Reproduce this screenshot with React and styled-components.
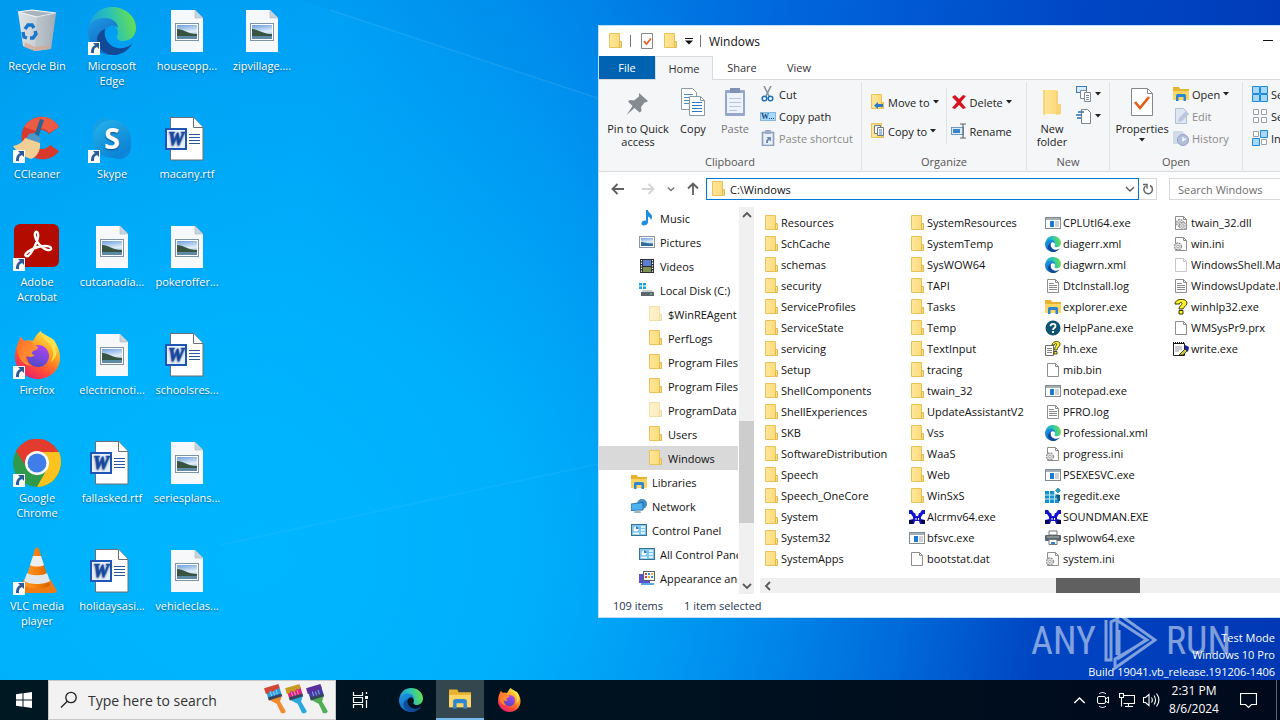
import React from 'react'
import styled, { createGlobalStyle, css } from 'styled-components'

const GlobalStyle = createGlobalStyle`
  * {
    box-sizing: border-box;
  }
  body {
    margin: 0;
    overflow: hidden;
  }
  body, button, input {
    font-family: "Open Sans", "Noto Sans", sans-serif;
    font-size: 11px;
  }
  button {
    border: 0;
    padding: 0;
    margin: 0;
    background: none;
    color: inherit;
  }
  ul {
    list-style: none;
    margin: 0;
    padding: 0;
  }
`

/* ---------- icons ---------- */

const Svg = styled.svg`
  display: block;
  flex: none;
  width: ${({ $w }) => $w}px;
  height: ${({ $h }) => $h}px;
`

const HiddenSvg = styled.svg`
  position: absolute;
  width: 0;
  height: 0;
`

const Defs = () => (
  <HiddenSvg aria-hidden="true">
    <defs>
      <linearGradient id="edgeTop" x1="0" y1="0.6" x2="1" y2="0.4">
        <stop offset="0" stopColor="#1b9de2" />
        <stop offset="0.5" stopColor="#2bc3b4" />
        <stop offset="1" stopColor="#6be04a" />
      </linearGradient>
      <linearGradient id="edgeLeft" x1="0" y1="0" x2="0.6" y2="1">
        <stop offset="0" stopColor="#1f9be4" />
        <stop offset="1" stopColor="#0f62bd" />
      </linearGradient>
      <linearGradient id="foxBody" x1="0.8" y1="0" x2="0.2" y2="1">
        <stop offset="0" stopColor="#fff44f" />
        <stop offset="0.4" stopColor="#ff9a1f" />
        <stop offset="0.7" stopColor="#ff4a3a" />
        <stop offset="1" stopColor="#e3167c" />
      </linearGradient>
      <linearGradient id="foxGlobe" x1="0.7" y1="0" x2="0.3" y2="1">
        <stop offset="0" stopColor="#b243f0" />
        <stop offset="1" stopColor="#4a4bc8" />
      </linearGradient>
      <linearGradient id="foxHead" x1="0" y1="0" x2="1" y2="1">
        <stop offset="0" stopColor="#ff6a2b" />
        <stop offset="1" stopColor="#ffa632" />
      </linearGradient>
      <linearGradient id="skype" x1="0" y1="0" x2="0.6" y2="1">
        <stop offset="0" stopColor="#27b3ec" />
        <stop offset="1" stopColor="#0b83d6" />
      </linearGradient>
      <linearGradient id="bin" x1="0" y1="0" x2="1" y2="0">
        <stop offset="0" stopColor="#dfe3e6" />
        <stop offset="0.6" stopColor="#c3cbd1" />
        <stop offset="1" stopColor="#8d9aa5" />
      </linearGradient>
      <linearGradient id="sky" x1="0" y1="0" x2="0.2" y2="1">
        <stop offset="0" stopColor="#6c9fdc" />
        <stop offset="0.6" stopColor="#e2eefa" />
        <stop offset="1" stopColor="#86a9bd" />
      </linearGradient>
      <linearGradient id="folder" x1="0" y1="0" x2="1" y2="0">
        <stop offset="0" stopColor="#ffe79a" />
        <stop offset="1" stopColor="#fbdb7c" />
      </linearGradient>
      <linearGradient id="cone" x1="0" y1="0" x2="1" y2="0">
        <stop offset="0" stopColor="#ff9a2c" />
        <stop offset="0.5" stopColor="#f77f0c" />
        <stop offset="1" stopColor="#d85f00" />
      </linearGradient>
    </defs>
  </HiddenSvg>
)

const EdgeShape = () => (
  <>
    <path d="M1 20C3 8 12 0 24 0c14 0 24 10 24 21 0 8-6 13-13 13-4 0-7-2-6-5 3-5-1-12-9-12C12 17 3 19 1 20z" fill="url(#edgeTop)" />
    <path d="M0 25c0-9 8-14 16-14 9 0 14 5 14 10-2-2-5-3-8-2-5 2-7 8-5 14 2 7 8 13 15 14-3 1-5 1-8 1C11 48 0 38 0 25z" fill="url(#edgeLeft)" />
    <path d="M17 22c-2 8 3 17 12 19 6 1 12-1 16-5-4 7-11 12-20 12-9-1-16-8-16-15 0-5 3-9 8-11z" fill="#114a97" />
  </>
)

const FirefoxShape = () => (
  <>
    <path d="M5 12c1-1 1-3 3-6 1 2 2 3 4 4 2-1 5-1 8 0 2-3 4-8 8-10 1 5 5 7 9 11 1-1 1-3 1-4 6 5 9 12 9 20 0 12-10 21-22 21S2 38 2 26c0-5 1-10 3-14z" fill="url(#foxBody)" />
    <path d="M28 1c0 6 8 9 11 16 2 5 1 10-1 14 5-3 8-12 4-20-1-3-3-3-4-4-3-2-8-4-10-6z" fill="#ffe04a" />
    <circle cx="25" cy="25" r="11" fill="url(#foxGlobe)" />
    <path d="M5 12c1-1 1-3 3-6 1 2 2 3 4 4 4-1 7 0 9 4 2 0 4 1 4 3-1 2-4 2-6 4-1 2 1 3 3 3-3 3-8 2-9 0-1 5 2 9 6 11C8 34 3 24 5 12z" fill="url(#foxHead)" />
  </>
)

const shortcutArrow = (
  <>
    <rect x="0" y="35" width="12" height="13" fill="#fbfdff" />
    <path d="M3 46c0-5 2-7 4-8l-2-2h6v6l-2-2c-3 1-3 3-3 6z" fill="#2c5a96" />
  </>
)

const desktopArt = {
  bin: (
    <>
      <path d="M5 5l14-2 24 3-5 36-16 2-12-5z" fill="url(#bin)" />
      <path d="M5 5l14-2 24 3-19 4z" fill="#a9b4bc" stroke="#f3f7f9" strokeWidth="1.2" />
      <path d="M24 10l-2 34 16-2 5-36z" fill="#aeb9c1" opacity=".55" />
      <path d="M12 35l10 5 15-2-1 4-14 2-11-4z" fill="#d9a48e" opacity=".7" />
      <g fill="none" stroke="#1777cc" strokeWidth="3.4">
        <path d="M12 22l3-4h4l2 3" />
        <path d="M22 24l1 3-3 4h-3" />
        <path d="M14 31l-3-1-1-5" />
      </g>
    </>
  ),
  edge: <EdgeShape />,
  ccleaner: (
    <>
      <path d="M46 12C42 5 34 1 26 2 14 4 7 14 9 26c2 12 13 20 24 18 6-1 10-4 13-8l-9-6c-3 4-8 5-12 3-5-2-7-8-5-13 3-6 12-7 16-1z" fill="#d9392c" />
      <path d="M46 12C42 5 34 1 26 2 19 3 14 7 11 12l12 4c4-4 10-3 13 2z" fill="#ee5b45" />
      <path d="M27 4l4 1-6 18-4-2z" fill="#2c6391" />
      <path d="M16 19c4-2 9 1 12 5l-3 5-13-4z" fill="#4f97c8" />
      <path d="M12 23l15 5c1 7-3 14-9 16C11 42 4 37 0 31c5-1 9-3 12-8z" fill="#f2cf95" />
    </>
  ),
  skype: (
    <>
      <circle cx="17" cy="16" r="13" fill="#149fe6" />
      <circle cx="31" cy="32" r="12" fill="#0d86da" />
      <circle cx="24" cy="24" r="19" fill="url(#skype)" />
      <text x="24" y="34" textAnchor="middle" fontFamily="Open Sans, sans-serif" fontWeight="700" fontSize="29" fill="#fff">S</text>
    </>
  ),
  acrobat: (
    <>
      <rect x="1" y="1" width="45" height="43" rx="6" fill="#b30b00" />
      <path d="M13 33c-3-2 5-7 12-9s14-1 13 2c-2 4-14-3-16-13-1-6 4-6 3 1-1 6-8 21-12 19z" fill="none" stroke="#fff" strokeWidth="2.4" />
    </>
  ),
  firefox: <FirefoxShape />,
  chrome: (
    <>
      <circle cx="24" cy="24" r="24" fill="#2f9a4b" />
      <path d="M3 12a24 24 0 0 1 42 0L46 14H24L14 29z" fill="#e33b2e" />
      <path d="M45 13a24 24 0 0 1-21 35l10-18-1-17z" fill="#fcc31e" />
      <path d="M24 13h22c2 5 3 11 0 19H30z" fill="#fcc31e" />
      <circle cx="24" cy="24" r="12" fill="#fff" />
      <circle cx="24" cy="24" r="9.5" fill="#3f7de8" />
    </>
  ),
  vlc: (
    <>
      <path d="M11 32h26l7 12-2 2H8l-2-2z" fill="#ee7c14" />
      <path d="M22 2c1-2 3-2 4 0l11 36c-4 5-22 5-26 0z" fill="url(#cone)" />
      <path d="M20 9h8l3 9c-3 2-11 2-14 0z" fill="#eceff1" />
      <path d="M14 26c4 3 16 3 20 0l3 8c-5 4-21 4-26 0z" fill="#e2e6e9" />
    </>
  ),
  image: (
    <>
      <path d="M8 3h24l8 8v34H8z" fill="#f7f8fa" />
      <path d="M32 3v8h8z" fill="#c9d3dc" stroke="#a5b8c8" strokeWidth=".6" />
      <rect x="12.500" y="16.500" width="23" height="17" fill="#fff" stroke="#7f93a6" />
      <rect x="14" y="18" width="20" height="14" fill="url(#sky)" />
      <path d="M14 22c6 0 11 5 20 5v2c-7 1-14 0-20 1z" fill="#36543f" />
      <path d="M14 29h20v3H14z" fill="#5f8aa6" />
    </>
  ),
  word: (
    <>
      <path d="M7.500 2.500h23l9.500 10v32.500h-32.500z" fill="#fff" stroke="#6b6f76" />
      <path d="M30.500 2.500v10H40" fill="#fff" stroke="#6b6f76" />
      <path d="M26 19.500h11M26 22.500h11M26 25.500h11M26 28.500h11" stroke="#2b579a" />
      <rect x="3" y="14" width="20" height="20" fill="#e8f0fb" stroke="#1f56b5" strokeWidth="2" />
      <text x="13" y="30" textAnchor="middle" fontFamily="Liberation Serif, serif" fontWeight="700" fontStyle="italic" fontSize="18" fill="#1c4fae" stroke="#1c4fae" strokeWidth=".7">W</text>
    </>
  ),
}

const doc = (
  <>
    <path d="M2.500 1.500h8l3 3v10h-11z" fill="#fff" stroke="#8e8e8e" />
    <path d="M10.500 1.500v3h3" fill="none" stroke="#8e8e8e" />
  </>
)

const gear = (cx, cy) => (
  <>
    <circle cx={cx} cy={cy} r="3.500" fill="#e6e6e6" stroke="#929292" strokeWidth="1.400" strokeDasharray="1.800 1" />
    <circle cx={cx} cy={cy} r="1.300" fill="#fff" stroke="#929292" strokeWidth=".8" />
  </>
)

const explorerFolder = (
  <>
    <path d="M0 1h6l1 2h9v11H0z" fill="#e9b32f" />
    <path d="M0 5h16v9H0z" fill="#fbd667" />
    <path d="M3 15V9.500C3 8.500 4 8 5 8h6c1 0 2 .5 2 1.500V15h-2.500v-4h-5v4z" fill="#2f86d0" />
  </>
)

const controlPanel = (
  <>
    <rect x=".5" y="2.500" width="15" height="11" fill="#7cc6f2" stroke="#38708f" />
    <circle cx="5" cy="7" r="2.500" fill="#fff" />
    <path d="M5 7V4.500A2.500 2.500 0 0 1 7.500 7z" fill="#2a75c0" />
    <path d="M2 11.500h6M10 5h4M10 8h4M10 11h4" stroke="#fff" strokeWidth="1.300" />
  </>
)

const bigFolder = (
  <>
    <path d="M2.500.5h10v14h-10z" fill="url(#folder)" stroke="#e9c25a" />
    <path d="M12.500 8.500h2v6h-2z" fill="#f9dd84" stroke="#e2b94f" />
  </>
)

const question = (x, y) => (
  <path
    d={`M${x} ${y + 3}c0-4 8-5 8-1 0 3-3 3-3 6h-2.500c0-3 2-4 2-6 0-1-2-1-2 1zM${x + 2} ${y + 9.5}h3v2.500h-3z`}
    fill="#fdf32b"
    stroke="#3c3a05"
    strokeWidth=".9"
  />
)

const smallArt = {
  folder: bigFolder,
  hidden: <g opacity=".5">{bigFolder}</g>,
  music: <path d="M7 0h2c0 3 4 3.500 4 7 0 1-.5 2.500-1.200 3C12 8 10 7 9 6.500V12c0 2-2 3.500-4.500 3.500S2 12 4 11c1-.6 2-.7 3-.4z" fill="#1c8ee0" />,
  pictures: (
    <>
      <rect x=".5" y="2.500" width="15" height="11" fill="#fff" stroke="#8b97a2" />
      <rect x="2" y="4" width="12" height="8" fill="url(#sky)" />
      <path d="M2 8c4 0 7 2 12 1.500V12H2z" fill="#2f6d9c" />
    </>
  ),
  videos: (
    <>
      <rect x="1" y="1" width="14" height="14" fill="#2b2d31" />
      <rect x="4" y="2" width="8" height="6" fill="#5a7fd1" />
      <rect x="4" y="9" width="8" height="5" fill="#7e9254" />
      <path d="M2.500 2v12M13.500 2v12" stroke="#fff" strokeWidth="1.200" strokeDasharray="1.300 1.300" />
    </>
  ),
  disk: (
    <>
      <path d="M0 1h3v2.500H0zM4 1h3v2.500H4zM0 4.500h3V7H0zM4 4.500h3V7H4z" fill="#16a5e0" />
      <path d="M4 8h9l2 3H2z" fill="#c9cdd0" />
      <rect x="2" y="10" width="13" height="4" fill="#5e666c" />
      <rect x="11" y="11.500" width="2" height="1" fill="#6df06a" />
    </>
  ),
  libraries: explorerFolder,
  explorer: explorerFolder,
  network: (
    <>
      <circle cx="11" cy="6" r="5" fill="#3f8fc4" />
      <path d="M0 6l12-1.500v7.500L0 12.500z" fill="#4cb1ee" stroke="#1c6ba8" strokeWidth=".9" />
      <path d="M4 12.500l5-.4 1 2.900H3z" fill="#9cb3c2" />
    </>
  ),
  control: controlPanel,
  appearance: (
    <>
      <rect x="0" y="4" width="11" height="9" fill="#5d51cf" />
      <rect x="4.500" y="1.500" width="11" height="9" fill="#fff" stroke="#5a6068" />
      <path d="M6 4h2M6 7h2" stroke="#e23a2e" strokeWidth="2" />
      <path d="M9 4h2M12 7h2" stroke="#2f8bd8" strokeWidth="2" />
      <path d="M12 4h2M9 7h2" stroke="#efb52a" strokeWidth="2" />
      <path d="M2 14h13" stroke="#5ea7de" strokeWidth="2" />
    </>
  ),
  exe: (
    <>
      <rect x=".5" y="2.500" width="15" height="11" fill="#fff" stroke="#7f8a93" />
      <path d="M1 4h14" stroke="#a5afb6" strokeWidth="2" />
      <rect x="5" y="6" width="4" height="6" fill="#1b79d8" />
      <path d="M10 7h4M10 9h4M10 11h4" stroke="#9aa4ab" />
    </>
  ),
  edge: <g transform="scale(.333)"><EdgeShape /></g>,
  log: <>{doc}<path d="M4 5.500h5M4 7.500h8M4 9.500h8M4 11.500h8" stroke="#8c8c8c" /></>,
  file: doc,
  manifest: <g opacity=".5">{doc}</g>,
  ini: <>{doc}{gear(5, 10.5)}</>,
  dll: <>{doc}{gear(7, 8)}{gear(10, 11)}</>,
  help: (
    <>
      <circle cx="8" cy="8" r="7.500" fill="#0f5374" />
      <path d="M5.500 6.300C5.500 3 10.500 3 10.500 6c0 2-2.500 2-2.500 4" fill="none" stroke="#fff" strokeWidth="1.800" />
      <rect x="7" y="11" width="2" height="2" fill="#fff" />
    </>
  ),
  winhelp: (
    <path d="M2 5c0-6 12-6 12-1 0 3-4 4-4 6H6c0-3 3-4 3-5.500C9 3 6.500 3 6.500 5zM6 11.500h4v3.500H6z" fill="#fdf32b" stroke="#3c3a05" />
  ),
  hh: (
    <>
      <path d="M.5 4.500h8v10h-8z" fill="#fff" stroke="#6d6d6d" />
      <path d="M2 7.500h5M2 9.500h5M2 11.500h5" stroke="#888" />
      {question(7, 1)}
    </>
  ),
  write: (
    <>
      <path d="M.5 2.500h11v12h-11z" fill="#fff" stroke="#222" />
      <path d="M0 2h12" stroke="#111" strokeWidth="2" strokeDasharray="1 1" />
      <path d="M2 6h7M2 8h7M2 10h4" stroke="#999" />
      <path d="M6 14l6-6 2 2-4 4z" fill="#d5cf1f" stroke="#222" strokeWidth=".8" />
      <path d="M12 4l4 2-1 5-3-3z" fill="#1c1f9f" />
    </>
  ),
  regedit: (
    <>
      <path d="M0 3h10v3h4v9H0z" fill="#1690cf" />
      <path d="M0 7h14M0 11h14M4.500 3v12M9.500 3v12" stroke="#bfe6f8" />
      <path d="M13 0l2.500 2.500L13 5l-2.500-2.500z" fill="#1fa3c9" stroke="#155f8c" strokeWidth=".6" />
      <path d="M11 7h4v6h-2z" fill="#165a7d" />
    </>
  ),
  sound: (
    <>
      <path d="M0 1h3l2 3h1l1 3h2l1-3h1l2-3h3v4h-2l-2 3v2l4 1v4h-5l-1-3H6l-1 3H0v-4l4-1V8L2 5H0z" fill="#1414d0" />
      <path d="M0 11h4v4H0zM12 11h4v4h-4z" fill="#07074a" />
      <path d="M6.500 9h1v2h-1zM9 9h1v2H9z" fill="#fff" />
    </>
  ),
  printer: (
    <>
      <path d="M4 1h8v4H4z" fill="#fff" stroke="#777" />
      <rect x="0" y="5" width="16" height="6" rx="1" fill="#59646c" />
      <path d="M2 7h12" stroke="#b5bec4" />
      <path d="M4 9.500h8v5H4z" fill="#fff" stroke="#777" />
      <path d="M6 12h4v2H6z" fill="#2a87d3" />
    </>
  ),
  check: (
    <>
      <path d="M2.500.5h11v15h-11z" fill="#fff" stroke="#85898d" />
      <path d="M5 8l2.500 3L12 5.500" fill="none" stroke="#e8622c" strokeWidth="1.800" />
    </>
  ),
  cut: (
    <>
      <path d="M4 0l5 10M11 0L6 10" stroke="#85929d" strokeWidth="1.600" />
      <circle cx="4.500" cy="12.500" r="2.300" fill="none" stroke="#2072b8" strokeWidth="1.500" />
      <circle cx="10.500" cy="12.500" r="2.300" fill="none" stroke="#2072b8" strokeWidth="1.500" />
    </>
  ),
  path: (
    <>
      <rect x=".5" y="4.500" width="15" height="8" fill="#aad9f8" stroke="#86b7dc" />
      <text x="1" y="11" fontFamily="Liberation Serif, serif" fontWeight="700" fontSize="8" fill="#134a85">W</text>
      <path d="M9 10.500h5" stroke="#134a85" strokeDasharray="1 1" />
    </>
  ),
  pasteShortcut: (
    <>
      <rect x="2.500" y="2.500" width="11" height="13" fill="#eaf0f8" stroke="#8d9dbd" strokeWidth="1.600" />
      <rect x="5" y="0" width="6" height="4" fill="#9caac6" />
      <path d="M6 13c0-3 1-4 2-4.500L6.500 7H11v4.500L9.500 10C8 10.500 8 11 8 13z" fill="#7185b5" />
    </>
  ),
  moveTo: (
    <>
      {bigFolder}
      <path d="M5 11.500L9 8v2h5v3H9v2z" fill="#2a78c8" />
    </>
  ),
  copyTo: (
    <>
      {bigFolder}
      <path d="M5.500 2.500h6v8h-6z" fill="#fff" stroke="#6b7d8d" />
      <path d="M8.500 4.500h6v8h-6z" fill="#fff" stroke="#6b7d8d" />
      <path d="M10 7h3M10 9h3M10 11h3" stroke="#4b85c0" />
    </>
  ),
  remove: <path d="M1 3l3-2 4 4 4-4 3 1-5 6 5 6-3 1-4-4-4 4-3-1 5-6z" fill="#d5121f" />,
  rename: (
    <>
      <rect x=".5" y="4.500" width="12" height="7" fill="#d9ecfa" stroke="#6f9cc2" />
      <rect x="2" y="6" width="7" height="4" fill="#3b84c9" />
      <path d="M9 1h6M9 15h6M12 1v14" stroke="#60656a" strokeWidth="1.200" />
    </>
  ),
  newItem: (
    <>
      <rect x=".5" y=".5" width="10" height="6" fill="#d6eafa" stroke="#3f7cb0" />
      <path d="M4.500 4.500h6v8h-6z" fill="#fff" stroke="#7c8994" />
      <path d="M8.500 6.500h6v9h-6z" fill="#fff" stroke="#7c8994" />
      <path d="M10 9.500h3M10 11.500h3M10 13.500h3" stroke="#7c8994" />
    </>
  ),
  easyAccess: (
    <>
      <path d="M5.500 1.500h6l3 3v11h-9z" fill="#fff" stroke="#7c8994" />
      <path d="M2 4h6M0 7h6M1 10h4" stroke="#2f6fae" strokeWidth="1.300" />
    </>
  ),
  edit: (
    <>
      <path d="M2.500.5h8l3 3v12h-11z" fill="#dfe7f3" stroke="#b4bfd2" />
      <path d="M5 14l1-4 7-7 3 3-7 7z" fill="#b9c6dd" />
    </>
  ),
  history: (
    <>
      <path d="M0 1h9l3 3v10H0z" fill="#d2dae8" />
      <circle cx="10" cy="10" r="5.500" fill="#b2bfda" stroke="#93a3c3" />
      <path d="M10 7v3.500l3-2" fill="none" stroke="#fff" strokeWidth="1.300" />
    </>
  ),
  selectAll: <path d="M.5.5h7v7h-7zM8.500.5h7v7h-7zM.5 8.500h7v7h-7zM8.500 8.500h7v7h-7z" fill="#a7d8fa" stroke="#1e88dc" />,
  selectNone: <path d="M1.500 1.500h5v5h-5zM9.500 1.500h5v5h-5zM1.500 9.500h5v5h-5zM9.500 9.500h5v5h-5z" fill="#fff" stroke="#9aa0a5" />,
  invert: (
    <>
      <path d="M1.500 1.500h5v5h-5zM9.500 9.500h5v5h-5z" fill="#fff" stroke="#9aa0a5" />
      <path d="M8.500.5h7v7h-7zM.5 8.500h7v7h-7z" fill="#a7d8fa" stroke="#1e88dc" />
    </>
  ),
}

const largeArt = {
  pin: <path d="M17 6l9 8-2 1.500-1-.5-4 5 .5 4-2 1.500-5-4.500-8 7 6-9-4.500-4.500L8 13l4 .5 5-4z" fill="#858b90" />,
  copy: (
    <>
      <path d="M4.500 1.500h11l4 4v17h-15z" fill="#fff" stroke="#8d99a5" />
      <path d="M7 7.500h9M7 10.500h9M7 13.500h9M7 16.500h6" stroke="#4b8acb" />
      <path d="M12.500 9.500h11l4 4v15h-15z" fill="#fff" stroke="#8d99a5" />
      <path d="M23.500 9.500v4h4" fill="none" stroke="#8d99a5" />
      <path d="M15 15.500h10M15 18.500h10M15 21.500h10M15 24.500h10" stroke="#2f78c4" />
    </>
  ),
  paste: (
    <>
      <rect x="6" y="3" width="20" height="26" rx="1" fill="#97a7c9" />
      <rect x="8" y="6" width="16" height="20" fill="#eef3fa" />
      <path d="M11 1h10v5H11z" fill="#8292b4" />
      <path d="M10 11.500h12M10 15.500h12M10 19.500h12M10 23.500h8" stroke="#b9c6de" />
    </>
  ),
  folder: (
    <>
      <path d="M7 3h13v24H7z" fill="url(#folder)" />
      <path d="M20 3l2 1v13h3v10l-5 1z" fill="#f6d476" />
      <path d="M7 3h2v26l-2-2z" fill="#f7d77c" />
    </>
  ),
  properties: (
    <>
      <path d="M5.500 1.500h16l5 5v22h-21z" fill="#fff" stroke="#83888d" />
      <path d="M21.500 1.500v5h5" fill="none" stroke="#83888d" />
      <path d="M9 15l5 6 9-11" fill="none" stroke="#e8591c" strokeWidth="2.600" />
    </>
  ),
}

const Small = ({ name }) => (
  <Svg $w={16} $h={16} viewBox="0 0 16 16" aria-hidden="true">{smallArt[name]}</Svg>
)

const Chevron = ({ dir = 'down', color = '#5a5a5a', thick = 1.4, size = 10 }) => {
  const d = {
    down: 'M1 3l4 4 4-4',
    up: 'M1 7l4-4 4 4',
    left: 'M7 1L3 5l4 4',
  }[dir]
  return (
    <Svg $w={size} $h={size} viewBox="0 0 10 10" aria-hidden="true">
      <path d={d} fill="none" stroke={color} strokeWidth={thick} />
    </Svg>
  )
}

const Caret = () => (
  <Svg $w={6} $h={4} viewBox="0 0 6 4" aria-hidden="true">
    <path d="M0 0h6L3 3.500z" fill="#222" />
  </Svg>
)

/* ---------- desktop ---------- */

const Screen = styled.div`
  height: 100vh;
  display: flex;
  flex-direction: column;
  overflow: hidden;
`

const Desktop = styled.main`
  position: relative;
  flex: 1;
  min-height: 0;
  overflow: hidden;
  background:
    radial-gradient(ellipse 62% 95% at 20% 82%, rgba(0, 182, 255, 1), rgba(0, 182, 255, 0.85) 35%, rgba(0, 170, 255, 0) 100%),
    linear-gradient(97deg, #0096ec 0%, #009cf4 24%, #0086ea 42%, #0066dc 58%, #0046c4 80%, #0038b4 100%);
`

const Beams = styled.svg`
  position: absolute;
  inset: 0;
  width: 100%;
  height: 100%;
`

const Shortcuts = styled.ul`
  position: relative;
  display: grid;
  grid-template-rows: repeat(6, 108px);
  grid-auto-columns: 75px;
  grid-auto-flow: column;
  width: max-content;
`

const ShortcutCell = styled.li`
  grid-column: ${({ $col }) => $col};
  grid-row: ${({ $row }) => $row};
`

const ShortcutButton = styled.button`
  display: flex;
  flex-direction: column;
  align-items: center;
  gap: 3px;
  width: 74px;
  padding-top: 7px;
  color: #fff;
  line-height: 15px;
  text-align: center;
  text-shadow: 0 1px 2px rgba(0, 30, 70, 0.6);
`

const ShortcutLabel = styled.span`
  width: 64px;
  white-space: ${({ $file }) => ($file ? 'nowrap' : 'normal')};
  display: flex;
  justify-content: center;
`

const desktopItems = [
  [1, 1, 'Recycle Bin', 'bin'],
  [1, 2, 'CCleaner', 'ccleaner', true],
  [1, 3, 'Adobe Acrobat', 'acrobat', true],
  [1, 4, 'Firefox', 'firefox', true],
  [1, 5, 'Google Chrome', 'chrome', true],
  [1, 6, 'VLC media player', 'vlc', true],
  [2, 1, 'Microsoft Edge', 'edge', true],
  [2, 2, 'Skype', 'skype', true],
  [2, 3, 'cutcanadia...', 'image'],
  [2, 4, 'electricnoti...', 'image'],
  [2, 5, 'fallasked.rtf', 'word'],
  [2, 6, 'holidaysasi...', 'word'],
  [3, 1, 'houseopp...', 'image'],
  [3, 2, 'macany.rtf', 'word'],
  [3, 3, 'pokeroffer...', 'image'],
  [3, 4, 'schoolsres...', 'word'],
  [3, 5, 'seriesplans...', 'image'],
  [3, 6, 'vehicleclas...', 'image'],
  [4, 1, 'zipvillage....', 'image'],
]

const DesktopIcons = () => (
  <Shortcuts>
    {desktopItems.map(([col, row, label, art, linked]) => (
      <ShortcutCell key={label} $col={col} $row={row}>
        <ShortcutButton>
          <Svg $w={48} $h={48} viewBox="0 0 48 48" aria-hidden="true">
            {desktopArt[art]}
            {linked && shortcutArrow}
          </Svg>
          <ShortcutLabel $file={!linked}>{label}</ShortcutLabel>
        </ShortcutButton>
      </ShortcutCell>
    ))}
  </Shortcuts>
)

/* ---------- explorer window ---------- */

const Window = styled.section`
  position: absolute;
  top: 25px;
  left: 598px;
  right: -104px;
  display: flex;
  flex-direction: column;
  background: #fff;
  border: 1px solid #bfe0f7;
  color: #111;
`

const TitleBar = styled.header`
  display: flex;
  align-items: center;
  height: 30px;
  padding-left: 8px;
`

const QuickAccess = styled.div`
  display: flex;
  align-items: center;
  gap: 7px;
  margin-right: 7px;
`

const Rule = styled.span`
  width: 1px;
  height: 12px;
  margin-right: 1px;
  background: #777;
`

const Title = styled.h1`
  flex: 1;
  margin: 0;
  font-size: 12px;
  font-weight: 400;
`

const Control = styled.button`
  display: grid;
  place-items: center;
  width: 46px;
  height: 30px;
`

const Tabs = styled.nav`
  display: flex;
  height: 24px;
  border-bottom: 1px solid #dadbdc;
`

const tabLook = {
  file: css`
    background: #0063b1;
    color: #fff;
  `,
  active: css`
    height: 24px;
    background: #f5f6f7;
    border: 1px solid #dadbdc;
    border-bottom: 0;
  `,
}

const Tab = styled.button`
  width: ${({ $wide }) => ($wide ? 58 : 56)}px;
  height: 23px;
  color: #333;
  ${({ $look }) => tabLook[$look]}
`

const Ribbon = styled.div`
  display: flex;
  height: 92px;
  background: #f5f6f7;
  border-bottom: 1px solid #dadbdc;
  overflow: hidden;
`

const Group = styled.section`
  display: flex;
  flex-direction: column;
  flex: none;
  width: ${({ $w }) => $w}px;
  margin: 2px 0 1px;
  border-right: 1px solid #e0e1e2;
  color: #222;
`

const GroupTools = styled.div`
  display: flex;
  flex: 1;
  padding: 1px 0 0 5px;
`

const GroupName = styled.h2`
  margin: 0;
  font-size: 11px;
  line-height: 16px;
  font-weight: 400;
  text-align: center;
  color: #555;
`

const LargeButton = styled.button`
  display: flex;
  flex-direction: column;
  align-items: center;
  gap: 3px;
  flex: none;
  width: ${({ $w }) => $w}px;
  padding-top: 4px;
  line-height: 13px;
  color: ${({ $off }) => ($off ? '#777' : 'inherit')};
`

const Stack = styled.div`
  display: flex;
  flex-direction: column;
  flex: none;
  padding: ${({ $loose }) => ($loose ? '8px 0 0 2px' : '0 0 0 4px')};
  gap: ${({ $loose }) => ($loose ? 7 : 0)}px;
`

const SmallButton = styled.button`
  display: flex;
  align-items: center;
  gap: 3px;
  height: 22px;
  white-space: nowrap;
  color: ${({ $off }) => ($off ? '#8a8a8a' : 'inherit')};
`

const InnerRule = styled.span`
  width: 1px;
  height: 56px;
  margin: 5px 2px 0 7px;
  background: #e0e1e2;
`

const Large = ({ art, w, off, children }) => (
  <LargeButton $w={w} $off={off}>
    <Svg $w={32} $h={32} viewBox="0 0 32 32" aria-hidden="true">{largeArt[art]}</Svg>
    {children}
  </LargeButton>
)

const Tool = ({ art, label, menu, off, hint }) => (
  <SmallButton $off={off} aria-label={hint}>
    <Small name={art} />
    {label}
    {menu && <Caret />}
  </SmallButton>
)

const AddressRow = styled.div`
  display: flex;
  align-items: center;
  height: 34px;
  padding: 0 10px 0 4px;
`

const NavButton = styled.button`
  display: grid;
  place-items: center;
  width: ${({ $w }) => $w}px;
  height: 22px;
`

const AddressBox = styled.label`
  display: flex;
  align-items: center;
  gap: 4px;
  flex: 1;
  height: 22px;
  padding: 0 3px 0 3px;
  border: 1px solid #0078d7;
`

const BareInput = styled.input`
  flex: 1;
  min-width: 0;
  padding: 0;
  border: 0;
  outline: 0;
  background: none;
  color: #111;

  &::placeholder {
    color: #6d6d6d;
    opacity: 1;
  }
`

const Refresh = styled.button`
  display: grid;
  place-items: center;
  width: 18px;
  height: 22px;
  border: 1px solid #d9d9d9;
  border-left: 0;
`

const SearchBox = styled.label`
  display: flex;
  width: 204px;
  height: 22px;
  margin-left: 12px;
  padding: 0 8px;
  border: 1px solid #d9d9d9;
`

const Body = styled.div`
  display: flex;
  height: 388px;
`

const Tree = styled.ul`
  flex: none;
  width: 140px;
  overflow: hidden;
`

const TreeItem = styled.button`
  display: flex;
  align-items: center;
  gap: 5px;
  width: 139px;
  height: 24px;
  padding-left: ${({ $level }) => 24 + $level * 8}px;
  white-space: nowrap;
  overflow: hidden;
  background: ${({ $current }) => ($current ? '#d9d9d9' : 'none')};
`

const VerticalBar = styled.div`
  display: flex;
  flex-direction: column;
  justify-content: space-between;
  width: 15px;
  margin-top: 1px;
  background: #f0f0f0;
`

const BarButton = styled.button`
  display: grid;
  place-items: center;
  flex: none;
  width: 15px;
  height: 16px;
`

const VerticalThumb = styled.div`
  height: 102px;
  margin: 198px 0 auto;
  background: #cdcdcd;
`

const Files = styled.div`
  flex: 1;
  min-width: 0;
  display: flex;
  flex-direction: column;
  justify-content: space-between;
  padding: 6px 0 1px 6px;
`

const FileList = styled.ul`
  display: grid;
  grid-template-rows: repeat(17, 21px);
  grid-template-columns: 146px 136px 128px auto;
  grid-auto-flow: column;
  padding-left: 3px;
`

const FileItem = styled.li`
  display: flex;
  align-items: center;
  gap: 2px;
  white-space: nowrap;
`

const HorizontalBar = styled.div`
  display: flex;
  height: 15px;
  background: #f0f0f0;
`

const HorizontalThumb = styled.div`
  width: 84px;
  margin-left: 281px;
  background: #606060;
`

const StatusBar = styled.footer`
  display: flex;
  align-items: center;
  gap: 21px;
  height: 23px;
  padding-left: 14px;
  color: #26344f;
`

const tree = [
  ['Music', 'music', 2],
  ['Pictures', 'pictures', 2],
  ['Videos', 'videos', 2],
  ['Local Disk (C:)', 'disk', 2],
  ['$WinREAgent', 'hidden', 3],
  ['PerfLogs', 'folder', 3],
  ['Program Files', 'folder', 3],
  ['Program Files (x86)', 'folder', 3],
  ['ProgramData', 'hidden', 3],
  ['Users', 'folder', 3],
  ['Windows', 'folder', 3, true],
  ['Libraries', 'libraries', 1],
  ['Network', 'network', 1],
  ['Control Panel', 'control', 1],
  ['All Control Panel Items', 'control', 2],
  ['Appearance and Personalization', 'appearance', 2],
]

const folders = [
  'Resources', 'SchCache', 'schemas', 'security', 'ServiceProfiles', 'ServiceState',
  'servicing', 'Setup', 'ShellComponents', 'ShellExperiences', 'SKB', 'SoftwareDistribution',
  'Speech', 'Speech_OneCore', 'System', 'System32', 'SystemApps', 'SystemResources',
  'SystemTemp', 'SysWOW64', 'TAPI', 'Tasks', 'Temp', 'TextInput', 'tracing', 'twain_32',
  'UpdateAssistantV2', 'Vss', 'WaaS', 'Web', 'WinSxS',
]

const files = [
  ...folders.map((name) => [name, 'folder']),
  ['Alcrmv64.exe', 'sound'],
  ['bfsvc.exe', 'exe'],
  ['bootstat.dat', 'file'],
  ['CPLUtl64.exe', 'exe'],
  ['diagerr.xml', 'edge'],
  ['diagwrn.xml', 'edge'],
  ['DtcInstall.log', 'log'],
  ['explorer.exe', 'explorer'],
  ['HelpPane.exe', 'help'],
  ['hh.exe', 'hh'],
  ['mib.bin', 'file'],
  ['notepad.exe', 'exe'],
  ['PFRO.log', 'log'],
  ['Professional.xml', 'edge'],
  ['progress.ini', 'ini'],
  ['PSEXESVC.exe', 'exe'],
  ['regedit.exe', 'regedit'],
  ['SOUNDMAN.EXE', 'sound'],
  ['splwow64.exe', 'printer'],
  ['system.ini', 'ini'],
  ['twain_32.dll', 'dll'],
  ['win.ini', 'ini'],
  ['WindowsShell.Manifest', 'manifest'],
  ['WindowsUpdate.log', 'log'],
  ['winhlp32.exe', 'winhelp'],
  ['WMSysPr9.prx', 'file'],
  ['write.exe', 'write'],
]

const Arrow = ({ d, color }) => (
  <Svg $w={14} $h={14} viewBox="0 0 14 14" aria-hidden="true">
    <path d={d} fill="none" stroke={color} strokeWidth="1.8" />
  </Svg>
)

const Explorer = () => (
  <Window aria-label="Windows folder">
    <TitleBar>
      <QuickAccess>
        <Small name="folder" />
        <Rule />
        <Small name="check" />
      </QuickAccess>
      <QuickAccess>
        <Small name="folder" />
        <Svg $w={8} $h={8} viewBox="0 0 8 8" aria-hidden="true">
          <path d="M0 1.500h8" stroke="#111" />
          <path d="M0 3.500h8L4 7.500z" fill="#111" />
        </Svg>
        <Rule />
      </QuickAccess>
      <Title>Windows</Title>
      <Control aria-label="Minimize">
        <Svg $w={10} $h={10} viewBox="0 0 10 10"><path d="M0 4.500h10" stroke="#111" /></Svg>
      </Control>
      <Control aria-label="Maximize">
        <Svg $w={10} $h={10} viewBox="0 0 10 10"><path d="M.5.5h9v9h-9z" fill="none" stroke="#111" /></Svg>
      </Control>
      <Control aria-label="Close">
        <Svg $w={10} $h={10} viewBox="0 0 10 10"><path d="M0 0l10 10M10 0L0 10" stroke="#111" /></Svg>
      </Control>
    </TitleBar>

    <Tabs>
      <Tab $look="file">File</Tab>
      <Tab $look="active" $wide>Home</Tab>
      <Tab $wide>Share</Tab>
      <Tab>View</Tab>
    </Tabs>

    <Ribbon>
      <Group $w={263}>
        <GroupTools>
          <Large art="pin" w={68}>Pin to Quick<br />access</Large>
          <Large art="copy" w={42}>Copy</Large>
          <Large art="paste" w={42} off>Paste</Large>
          <Stack>
            <Tool art="cut" label="Cut" />
            <Tool art="path" label="Copy path" />
            <Tool art="pasteShortcut" label="Paste shortcut" off />
          </Stack>
        </GroupTools>
        <GroupName>Clipboard</GroupName>
      </Group>
      <Group $w={165}>
        <GroupTools>
          <Stack $loose>
            <Tool art="moveTo" label="Move to" menu />
            <Tool art="copyTo" label="Copy to" menu />
          </Stack>
          <InnerRule />
          <Stack $loose>
            <Tool art="remove" label="Delete" menu />
            <Tool art="rename" label="Rename" />
          </Stack>
        </GroupTools>
        <GroupName>Organize</GroupName>
      </Group>
      <Group $w={83}>
        <GroupTools>
          <Large art="folder" w={40}>New<br />folder</Large>
          <Stack>
            <Tool art="newItem" hint="New item" menu />
            <Tool art="easyAccess" hint="Easy access" menu />
          </Stack>
        </GroupTools>
        <GroupName>New</GroupName>
      </Group>
      <Group $w={133}>
        <GroupTools>
          <Large art="properties" w={54}>
            Properties
            <Caret />
          </Large>
          <Stack>
            <Tool art="explorer" label="Open" menu />
            <Tool art="edit" label="Edit" off />
            <Tool art="history" label="History" off />
          </Stack>
        </GroupTools>
        <GroupName>Open</GroupName>
      </Group>
      <Group $w={112}>
        <GroupTools>
          <Stack>
            <Tool art="selectAll" label="Select all" />
            <Tool art="selectNone" label="Select none" />
            <Tool art="invert" label="Invert selection" />
          </Stack>
        </GroupTools>
        <GroupName>Select</GroupName>
      </Group>
    </Ribbon>

    <AddressRow>
      <NavButton $w={30} aria-label="Back"><Arrow d="M13 7H2M6.500 2L1.500 7l5 5" color="#5f5f5f" /></NavButton>
      <NavButton $w={30} aria-label="Forward"><Arrow d="M1 7h11M7.500 2l5 5-5 5" color="#d5d5d5" /></NavButton>
      <NavButton $w={16} aria-label="Recent locations"><Chevron color="#777" size={8} thick={1.8} /></NavButton>
      <NavButton $w={27} aria-label="Up"><Arrow d="M7 13V2M2 6.500l5-5 5 5" color="#5f5f5f" /></NavButton>
      <AddressBox>
        <Small name="folder" />
        <BareInput aria-label="Address" defaultValue="C:\Windows" />
        <Chevron />
      </AddressBox>
      <Refresh aria-label="Refresh">
        <Svg $w={12} $h={12} viewBox="0 0 12 12">
          <path d="M8 2.500a4.300 4.300 0 1 1-4.500.5M1 1.500h4v4" fill="none" stroke="#666" strokeWidth="1.500" />
        </Svg>
      </Refresh>
      <SearchBox>
        <BareInput aria-label="Search Windows" placeholder="Search Windows" />
      </SearchBox>
    </AddressRow>

    <Body>
      <Tree>
        {tree.map(([label, art, level, current]) => (
          <li key={label}>
            <TreeItem $level={level} $current={current}>
              <Small name={art} />
              {label}
            </TreeItem>
          </li>
        ))}
      </Tree>
      <VerticalBar>
        <BarButton aria-label="Scroll up"><Chevron dir="up" thick={1.8} /></BarButton>
        <VerticalThumb />
        <BarButton aria-label="Scroll down"><Chevron thick={1.8} /></BarButton>
      </VerticalBar>
      <Files>
        <FileList>
          {files.map(([name, art]) => (
            <FileItem key={name}>
              <Small name={art} />
              {name}
            </FileItem>
          ))}
        </FileList>
        <HorizontalBar>
          <BarButton aria-label="Scroll left"><Chevron dir="left" thick={1.8} /></BarButton>
          <HorizontalThumb />
        </HorizontalBar>
      </Files>
    </Body>

    <StatusBar>
      <span>109 items</span>
      <span>1 item selected</span>
    </StatusBar>
  </Window>
)

/* ---------- watermarks ---------- */

const BuildInfo = styled.div`
  position: absolute;
  right: 5px;
  bottom: 0;
  color: #fff;
  line-height: 17px;
  text-align: right;
`

const Brand = styled.div`
  position: absolute;
  right: 49px;
  bottom: 8px;
  display: flex;
  align-items: center;
  gap: 7px;
  font-family: "Roboto Condensed", "Liberation Sans Narrow", "Liberation Sans", sans-serif;
  font-size: 38px;
  line-height: 62px;
  color: #fff;
  opacity: 0.5;
`

/* ---------- taskbar ---------- */

const Taskbar = styled.footer`
  display: flex;
  flex: none;
  height: 40px;
  background: linear-gradient(90deg, #001822, #000a1c);
  color: #fff;
`

const TaskButton = styled.button`
  display: grid;
  place-items: center;
  width: ${({ $w = 48 }) => $w}px;
  height: 40px;
  margin-right: ${({ $gap = 0 }) => $gap}px;
  ${({ $open }) => $open && css`
    background: #34474f;
    border-bottom: 2px solid #76b9ed;
  `}
`

const TaskSearch = styled.label`
  display: flex;
  align-items: center;
  gap: 10px;
  width: 288px;
  height: 40px;
  padding: 0 6px 0 11px;
  background: #f2f2f2;
  border: 1px solid #c8c8c8;

  input {
    font-size: 14px;
  }
  input::placeholder {
    color: #333;
  }
`

const Tray = styled.div`
  display: flex;
  align-items: center;
  margin-left: auto;
  padding-right: 3px;
`

const Clock = styled.div`
  width: 62px;
  font-size: 12px;
  line-height: 18px;
  text-align: center;
`

const Peek = styled.span`
  width: 1px;
  height: 40px;
  margin-left: 5px;
  background: #5a6470;
`

const brushes = [
  ['#2b9fe6', '#d64532', '#f28a2e'],
  ['#d8247c', '#c99a22', '#29a9de'],
  ['#3a3fa8', '#5c2b9c', '#4fae54'],
]

const Taskband = () => (
  <Taskbar>
    <TaskButton aria-label="Start">
      <Svg $w={16} $h={16} viewBox="0 0 16 16">
        <path d="M0 2.200l6.500-.9v6.200H0zM7.500 1.200L16 0v7.500H7.500zM0 8.500h6.500v6.200L0 13.800zM7.500 8.500H16V16l-8.500-1.200z" fill="#fff" />
      </Svg>
    </TaskButton>
    <TaskSearch>
      <Svg $w={18} $h={18} viewBox="0 0 18 18" aria-hidden="true">
        <circle cx="11" cy="6.500" r="5.200" fill="none" stroke="#222" strokeWidth="1.300" />
        <path d="M7.300 10.200L1 16.500" stroke="#222" strokeWidth="1.300" />
      </Svg>
      <BareInput aria-label="Search" placeholder="Type here to search" />
      <Svg $w={66} $h={34} viewBox="0 0 66 34" aria-hidden="true">
        {brushes.map(([bristle, paint, handle], i) => (
          <g key={paint} transform={`translate(${2 + i * 21} 5) rotate(-17)`}>
            <path d="M6 15h4l3 13c0 2-5 2-5 0z" fill={handle} />
            <path d="M0 12h14l-4 6H6z" fill={handle} />
            <path d="M0 2h14v9H0z" fill={bristle} />
            <path d="M4 5v5M7 5v5M10 5v5" stroke="#fff" opacity=".5" />
            <path d="M-1 0h15v4l-2 1-2-1-3 2-3-2-2 2H-1z" fill={paint} />
            <rect x="0" y="10" width="14" height="3" fill="#37445c" />
          </g>
        ))}
      </Svg>
    </TaskSearch>
    <TaskButton $gap={3} aria-label="Task view">
      <Svg $w={17} $h={16} viewBox="0 0 17 16">
        <path d="M1.500 0v3.500h9V0M1.500 16v-3.500h9V16M1.500 5.500h9v5h-9zM14.500 0v2M14.500 8v8" fill="none" stroke="#fff" strokeWidth="1.200" />
        <rect x="13" y="4" width="3" height="3" fill="#fff" />
      </Svg>
    </TaskButton>
    <TaskButton $gap={1} aria-label="Microsoft Edge">
      <Svg $w={24} $h={24} viewBox="0 0 48 48"><EdgeShape /></Svg>
    </TaskButton>
    <TaskButton $gap={1} $open aria-label="File Explorer">
      <Svg $w={22} $h={22} viewBox="0 0 16 16">{explorerFolder}</Svg>
    </TaskButton>
    <TaskButton aria-label="Firefox">
      <Svg $w={24} $h={24} viewBox="0 0 48 48"><FirefoxShape /></Svg>
    </TaskButton>
    <Tray>
      <TaskButton $w={24} aria-label="Show hidden icons"><Chevron dir="up" color="#fff" thick={1.1} size={13} /></TaskButton>
      <TaskButton $w={24} aria-label="Meet now">
        <Svg $w={16} $h={18} viewBox="0 0 16 18">
          <g fill="none" stroke="#fff">
            <rect x="2.500" y="5.500" width="8" height="7" rx="1.500" />
            <path d="M10.500 8l3-2v6l-3-2M4 3c2-2 5-2 7 0M4 15c2 2 5 2 7 0" />
          </g>
        </Svg>
      </TaskButton>
      <TaskButton $w={24} aria-label="Network">
        <Svg $w={16} $h={16} viewBox="0 0 16 16">
          <path d="M4.500 3.500h11v8h-11M9.500 11.500v3M6 14.500h8M.5 1.500h4v4h-4zM2.500 5.500v9" fill="none" stroke="#fff" strokeWidth="1.100" />
        </Svg>
      </TaskButton>
      <TaskButton $w={24} aria-label="Volume">
        <Svg $w={17} $h={16} viewBox="0 0 17 16">
          <path d="M.5 5.500h2l3.500-3v11l-3.500-3h-2zM8.500 5.500c1 1.500 1 3.500 0 5M11 3.500c2 2.500 2 6.500 0 9M13.500 1.500c3 4 3 9 0 13" fill="none" stroke="#fff" strokeWidth="1.100" />
        </Svg>
      </TaskButton>
      <Clock>2:31 PM<br />8/6/2024</Clock>
      <TaskButton $w={46} aria-label="Notifications">
        <Svg $w={17} $h={17} viewBox="0 0 17 17">
          <path d="M.5 1.500h16v11h-5l-3 3-3-3h-5z" fill="none" stroke="#fff" strokeWidth="1.200" />
        </Svg>
      </TaskButton>
      <Peek />
    </Tray>
  </Taskbar>
)

const App = () => (
  <Screen>
    <GlobalStyle />
    <Defs />
    <Desktop>
      <Beams viewBox="0 0 1280 680" preserveAspectRatio="none" aria-hidden="true">
        <path d="M300 0L640 112V0z" fill="#0060c8" opacity=".06" />
        <path d="M330 10L640 112" stroke="#7fd0ff" strokeWidth="1.500" opacity=".16" />
        <path d="M220 545L640 455" stroke="#7fd0ff" strokeWidth="1.500" opacity=".1" />
      </Beams>
      <DesktopIcons />
      <Explorer />
      <BuildInfo>
        Test Mode<br />
        Windows 10 Pro<br />
        Build 19041.vb_release.191206-1406
      </BuildInfo>
      <Brand aria-hidden="true">
        ANY
        <Svg $w={56} $h={62} viewBox="0 0 56 62">
          <path d="M3 10v40h5V12l8-4M14 3v42M14 3l38 27-40 28V49l32-19-29-19M16 20v28l27-18" fill="none" stroke="#fff" strokeWidth="3" />
        </Svg>
        RUN
      </Brand>
    </Desktop>
    <Taskband />
  </Screen>
)

export default App
